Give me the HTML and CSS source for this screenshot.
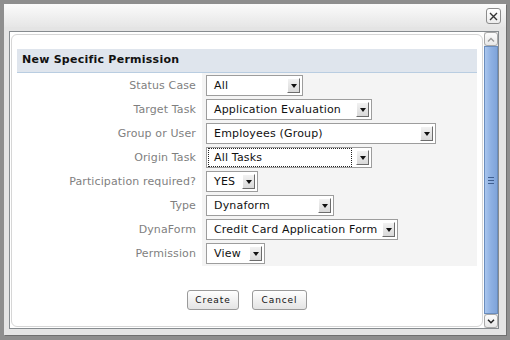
FILE: index.html
```html
<!DOCTYPE html>
<html>
<head>
<meta charset="utf-8">
<link rel="stylesheet" href="styles.css">
</head>
<body>
<div class="dialog">
  <div class="titlebar">
    <div class="close"><svg width="9" height="9" viewBox="0 0 9 9"><path d="M1 1L8 8M8 1L1 8" stroke="#333" stroke-width="1.4"/></svg></div>
  </div>
  <div class="frame">
    <div class="content">
      <div class="inner">
        <div class="header">New Specific Permission</div>
        <div class="form">
          <div class="row"><div class="label">Status Case</div><div class="field"><div class="sel" style="width:97px"><span>All</span><i></i></div></div></div>
          <div class="row"><div class="label">Target Task</div><div class="field"><div class="sel" style="width:166px"><span>Application Evaluation</span><i></i></div></div></div>
          <div class="row"><div class="label">Group or User</div><div class="field"><div class="sel" style="width:230px"><span>Employees (Group)</span><i></i></div></div></div>
          <div class="row"><div class="label">Origin Task</div><div class="field"><div class="sel focus" style="width:166px"><span>All Tasks</span><i></i></div></div></div>
          <div class="row"><div class="label">Participation required?</div><div class="field"><div class="sel" style="width:52px"><span>YES</span><i></i></div></div></div>
          <div class="row"><div class="label">Type</div><div class="field"><div class="sel" style="width:128px"><span>Dynaform</span><i></i></div></div></div>
          <div class="row"><div class="label">DynaForm</div><div class="field"><div class="sel" style="width:192px"><span>Credit Card Application Form</span><i></i></div></div></div>
          <div class="row"><div class="label">Permission</div><div class="field"><div class="sel" style="width:59px"><span>View</span><i></i></div></div></div>
        </div>
        <div class="buttons">
          <div class="btn create">Create</div>
          <div class="btn cancel">Cancel</div>
        </div>
      </div>
    </div>
    <div class="scrollbar">
      <div class="sb-btn"><svg width="8" height="5" viewBox="0 0 8 5"><path d="M1 4.5L4 1.5L7 4.5" fill="none" stroke="#999" stroke-width="1.3"/></svg></div>
      <div class="thumb"><div class="grip"><b></b><b></b><b></b></div></div>
      <div class="sb-btn"><svg width="8" height="5" viewBox="0 0 8 5"><path d="M1 0.8L4 3.8L7 0.8" fill="none" stroke="#222" stroke-width="1.5"/></svg></div>
    </div>
  </div>
</div>
</body>
</html>
```
FILE: styles.css
```css
html, body {
  margin: 0;
  padding: 0;
}
body {
  background: #8e8e8e;
  width: 510px;
  height: 340px;
  overflow: hidden;
  font-family: "DejaVu Sans", sans-serif;
  font-size: 11px;
}
.dialog {
  margin: 4px 0 0 4px;
  width: 502px;
  height: 331px;
  background: #e4e4e4;
  display: flex;
  flex-direction: column;
  box-shadow: 1px 1px 0 #6f6f6f;
}
.titlebar {
  height: 23px;
  flex: none;
  background: linear-gradient(#fbfbfb, #e6e6e6);
  display: flex;
  justify-content: flex-end;
  align-items: flex-start;
  padding: 4px 5px 0 0;
  box-sizing: border-box;
}
.close {
  width: 13px;
  height: 14px;
  border: 1px solid #8c8c8c;
  border-radius: 3px;
  background: linear-gradient(#ffffff, #ececec);
  display: flex;
  align-items: center;
  justify-content: center;
}
.frame {
  flex: 1;
  margin: 4px 7px 6px 5px;
  border: 1px solid #868b8f;
  display: flex;
  min-height: 0;
}
.content {
  flex: 1;
  background: #ffffff;
  padding: 2px 1px 1px 1px;
  min-width: 0;
}
.inner {
  height: 100%;
  box-sizing: border-box;
  border: 1px solid #d6d6d6;
  border-radius: 6px;
  padding: 14px 5px 0 5px;
}
.header {
  height: 24px;
  box-sizing: border-box;
  background: #dfe5ed;
  border-bottom: 1px solid #b9cde1;
  font-weight: bold;
  font-size: 11px;
  letter-spacing: 0.25px;
  color: #111;
  padding: 4px 0 0 5px;
}
.form {
  padding-bottom: 1px;
  background: linear-gradient(to right, #ffffff 185px, #f4f4f4 185px);
}
.row {
  display: flex;
  height: 24px;
  box-sizing: border-box;
  padding-top: 2px;
}
.label {
  width: 185px;
  flex: none;
  box-sizing: border-box;
  padding-right: 6px;
  text-align: right;
  color: #7f7f7f;
  line-height: 21px;
  letter-spacing: 0.12px;
}
.field {
  padding-left: 4px;
}
.sel {
  height: 21px;
  box-sizing: border-box;
  border: 1px solid #9d9d9d;
  background: #fff;
  display: flex;
  align-items: center;
  justify-content: space-between;
  color: #111;
  padding: 0 2px 0 1px;
  letter-spacing: 0.18px;
}
.sel span {
  padding-left: 6px;
  line-height: 17px;
  white-space: nowrap;
}
.sel.focus span {
  flex: 1;
  margin-right: 4px;
  padding-left: 5px;
  border: 1px dotted #222;
}
.sel i {
  flex: none;
  width: 13px;
  height: 15px;
  box-sizing: border-box;
  border-top: 1px solid #fff;
  border-left: 1px solid #fff;
  border-right: 1px solid #6c6c6c;
  border-bottom: 1px solid #6c6c6c;
  background: linear-gradient(#f2f2f2, #d9d9d9);
  position: relative;
}
.sel i::after {
  content: "";
  position: absolute;
  left: 3px;
  top: 5px;
  border-left: 3px solid transparent;
  border-right: 3px solid transparent;
  border-top: 4px solid #111;
}
.buttons {
  display: flex;
  justify-content: center;
  gap: 13px;
  margin-top: 24px;
}
.btn {
  height: 20px;
  box-sizing: border-box;
  border: 1px solid #9a9a9a;
  border-radius: 3px;
  background: linear-gradient(#ffffff, #e4e4e4);
  font-size: 9px;
  letter-spacing: 0.9px;
  color: #111;
  display: flex;
  align-items: center;
  justify-content: center;
}
.create { width: 52px; }
.cancel { width: 55px; }
.scrollbar {
  width: 14px;
  flex: none;
  display: flex;
  flex-direction: column;
  background: #e8e8e8;
}
.sb-btn {
  height: 14px;
  flex: none;
  box-sizing: border-box;
  border: 1px solid #a8a8a8;
  border-radius: 3px;
  background: linear-gradient(#fcfcfc, #e8e8e8);
  display: flex;
  align-items: center;
  justify-content: center;
}
.thumb {
  flex: 1;
  box-sizing: border-box;
  border: 1px solid #6a8dbd;
  background: linear-gradient(to right, #aac6ee, #8db0e2 50%, #7fa4da);
  display: flex;
  align-items: center;
  justify-content: center;
}
.grip {
  display: flex;
  flex-direction: column;
  gap: 2px;
}
.grip b {
  display: block;
  width: 6px;
  height: 1px;
  background: #3f5f8f;
}
```
